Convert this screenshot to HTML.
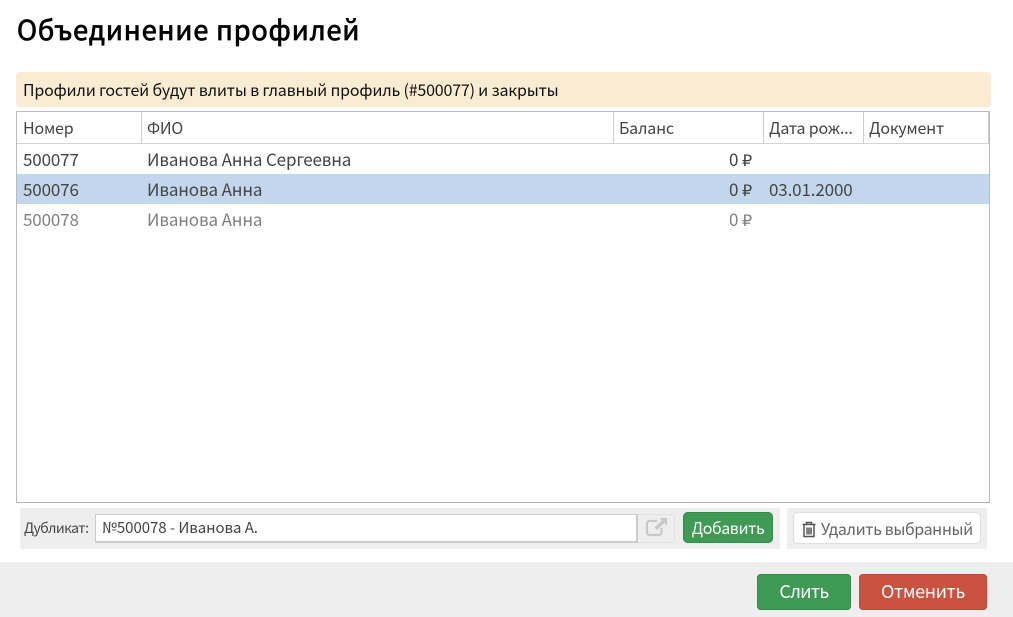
<!DOCTYPE html>
<html lang="ru"><head><meta charset="utf-8"><title>Объединение профилей</title>
<style>
html,body{margin:0;padding:0;background:#fff}
body{width:1013px;height:617px;position:relative;overflow:hidden;font-family:"Noto Sans CJK SC","Liberation Sans",sans-serif;color:#444;font-size:16px}
.a{position:absolute;white-space:nowrap}
.t{line-height:30px;height:30px;font-size:17px;letter-spacing:-.14px}
.h{line-height:28px;top:113px;color:#444;letter-spacing:-.2px}
.v{position:absolute;top:112px;height:31px;width:1px;background:#ccc}
.rub{font-family:"DejaVu Sans",sans-serif;font-size:16px}
</style></head><body>
<div class="a" style="left:17px;top:10px;font-size:27px;line-height:38px;font-weight:400;-webkit-text-stroke:.8px #000;color:#000;letter-spacing:.9px">Объединение профилей</div>
<div class="a" style="left:16px;top:72px;width:975px;height:35px;background:#faebd3;border-radius:4px"></div>
<div class="a" style="left:23px;top:77px;line-height:24px;color:#111;font-size:16px;letter-spacing:-.19px">Профили гостей будут влиты в главный профиль (#500077) и закрыты</div>

<div class="a" style="left:16px;top:111px;width:972px;height:390px;border:1px solid #bbb;border-bottom-color:#b4b4b4;background:#fff"></div>
<div class="a" style="left:17px;top:143px;width:972px;height:1px;background:#d4d4d4"></div>
<div class="v" style="left:141px"></div><div class="v" style="left:613px"></div><div class="v" style="left:763px"></div><div class="v" style="left:863px"></div><div class="v" style="left:988px"></div>
<div class="a h" style="left:23px">Номер</div>
<div class="a h" style="left:147px">ФИО</div>
<div class="a h" style="left:619px">Баланс</div>
<div class="a h" style="left:769px">Дата рож...</div>
<div class="a h" style="left:869px">Документ</div>

<div class="a" style="left:17px;top:174px;width:972px;height:30px;background:#c3d7ec"></div>
<div class="a t" style="left:23px;top:144px">500077</div>
<div class="a t" style="left:147px;top:144px">Иванова Анна Сергеевна</div>
<div class="a t" style="left:729px;top:144px">0 <span class="rub">₽</span></div>
<div class="a t" style="left:23px;top:174px">500076</div>
<div class="a t" style="left:147px;top:174px">Иванова Анна</div>
<div class="a t" style="left:729px;top:174px">0 <span class="rub">₽</span></div>
<div class="a t" style="left:769px;top:174px">03.01.2000</div>
<div class="a t" style="left:23px;top:204px;color:#808080">500078</div>
<div class="a t" style="left:147px;top:204px;color:#808080">Иванова Анна</div>
<div class="a t" style="left:729px;top:204px;color:#808080">0 <span class="rub">₽</span></div>

<div class="a" style="left:20px;top:508px;width:760px;height:41px;background:#eee;border-radius:3px 0 0 3px"></div>
<div class="a" style="left:24px;top:517px;font-size:14px;line-height:22px;color:#444;letter-spacing:-.55px">Дубликат:</div>
<div class="a" style="left:95px;top:514px;width:540px;height:26px;background:#fff;border:1px solid #ccc;border-width:1px 2px 2px 1px"></div>
<div class="a" style="left:102px;top:516px;font-size:15px;line-height:24px;color:#444;letter-spacing:-.05px">№500078 - Иванова А.</div>
<div class="a" style="left:638px;top:514px;width:36px;height:27px;background:#eee;border:1px solid #e2e2e2;border-left:0;border-radius:0 3px 3px 0"></div>
<svg class="a" style="left:645px;top:517px" width="23" height="20" viewBox="0 0 23 20">
<path d="M12 4H4.500C3 4 2 5 2 6.500V15.500C2 17 3 18 4.500 18H14C15.500 18 16.500 17 16.500 15.500V11" fill="none" stroke="#c8c8c8" stroke-width="2.200"/>
<path d="M14.500 1H22V8.500L19.500 6L12 13L9.500 10.500L17 3.500Z" fill="#c8c8c8"/></svg>
<div class="a" style="left:683px;top:512px;width:90px;height:31px;background:#3e9a54;border-radius:5px;color:#fff;text-align:center;line-height:31px;font-size:16px;letter-spacing:-.4px;box-shadow:inset 0 0 0 1px #368a4a">Добавить</div>

<div class="a" style="left:787px;top:508px;width:200px;height:41px;background:#eee"></div>
<div class="a" style="left:793px;top:512px;width:186px;height:30px;background:#fff;border:1px solid #ddd;border-radius:5px"></div>
<svg class="a" style="left:801px;top:521px" width="16" height="17" viewBox="0 0 16 17">
<path d="M5.500 3V1.500H10.500V3M1.500 3.500H14.500M3 4V15.500H13V4M6 6.500V13.500M8 6.500V13.500M10 6.500V13.500" fill="none" stroke="#555" stroke-width="1.500"/></svg>
<div class="a" style="left:821px;top:513px;font-size:16px;line-height:30px;color:#666;letter-spacing:-.4px">Удалить выбранный</div>

<div class="a" style="left:0;top:562px;width:1013px;height:55px;background:#eee"></div>
<div class="a" style="left:757px;top:574px;width:94px;height:36px;background:#3e9a54;border-radius:4px;color:#fff;text-align:center;line-height:35px;font-size:18px;letter-spacing:-.7px;box-shadow:inset 0 0 0 1px #368a4a">Слить</div>
<div class="a" style="left:859px;top:574px;width:128px;height:36px;background:#cc5240;border-radius:4px;color:#fff;text-align:center;line-height:35px;font-size:18px;letter-spacing:-.4px;box-shadow:inset 0 0 0 1px #bd4a3a">Отменить</div>
</body></html>
